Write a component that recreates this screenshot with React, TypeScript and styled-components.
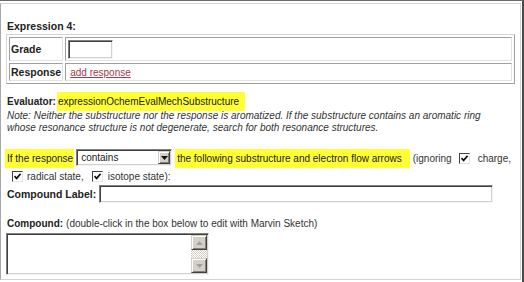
import React from "react"
import styled, { createGlobalStyle } from "styled-components"

const GlobalStyle = createGlobalStyle`
	html, body {
		margin: 0;
		padding: 0;
		background: #fff;
	}
	body {
		font-family: "Liberation Sans", Arial, sans-serif;
		color: #333;
	}
`

const Frame = styled.div`
	box-sizing: border-box;
	width: 524px;
	height: 282px;
	border-top: 1px solid #6a6a6a;
	border-right: 2px solid #4a4a4a;
	padding: 2px 1px 2px 0;
	background: #fff;
`

const Panel = styled.div`
	box-sizing: border-box;
	height: 100%;
	border: 1px solid #d4d4d4;
	border-left-color: #a8a8a8;
	padding: 16px 6px 0 6px;
	display: flex;
	flex-direction: column;
	align-items: flex-start;
`

const Title = styled.div`
	font-size: 10.5px;
	font-weight: bold;
	line-height: 13px;
	color: #222;
`

const Table = styled.table`
	margin: 1px 0 0 -1px;
	width: 509px;
	border-collapse: separate;
	border-spacing: 2px;
	border: 1px solid;
	border-color: #d4d4d4 #a0a0a0 #a0a0a0 #d4d4d4;
`

const Row = styled.tr<{ $h: number }>`
	height: ${(p) => p.$h}px;
`

const Cell = styled.td<{ $label?: boolean }>`
	border: 1px solid;
	border-color: #a0a0a0 #e2e2e2 #e2e2e2 #a0a0a0;
	padding: ${(p) => (p.$label ? "0 1px" : "0 2px")};
	width: ${(p) => (p.$label ? "1px" : "auto")};
	white-space: nowrap;
	vertical-align: middle;
	font-size: 10.5px;
	font-weight: bold;
	color: #222;
`

const SunkenInput = styled.div<{ $w: number; $h: number }>`
	box-sizing: border-box;
	width: ${(p) => p.$w}px;
	height: ${(p) => p.$h}px;
	border: 1px solid;
	border-color: #808080 #f4f4f4 #f4f4f4 #808080;
	box-shadow: inset 1px 1px #404040, inset -1px -1px #d4d0c8;
	background: #fff;
`

const Link = styled.a`
	margin-left: 2px;
	font-size: 10px;
	font-weight: normal;
	color: #a33a4a;
	text-decoration: underline;
`

const Line = styled.div<{ $h: number; $top?: number }>`
	display: flex;
	align-items: center;
	height: ${(p) => p.$h}px;
	margin-top: ${(p) => p.$top ?? 0}px;
	font-size: 10px;
	white-space: nowrap;
`

const Bold = styled.span<{ $size?: number }>`
	font-weight: bold;
	font-size: ${(p) => p.$size ?? 10}px;
	color: #222;
`

const Mark = styled.span<{ $l?: number; $r?: number; $ml?: number }>`
	display: inline-block;
	height: 19px;
	line-height: 19px;
	background: #ffff33;
	color: #222;
	padding: 0 ${(p) => p.$r ?? 1}px 0 ${(p) => p.$l ?? 2}px;
	margin-left: ${(p) => p.$ml ?? 0}px;
`

const Note = styled.div`
	font-size: 10px;
	font-style: italic;
	line-height: 12px;
	color: #333;
`

const Plain = styled.span<{ $ml?: number }>`
	margin-left: ${(p) => p.$ml ?? 0}px;
	color: #333;
`

const Select = styled.div`
	box-sizing: border-box;
	display: flex;
	width: 96px;
	height: 17px;
	margin-left: 2px;
	border: 1px solid;
	border-color: #808080 #f4f4f4 #f4f4f4 #808080;
	box-shadow: inset 1px 1px #404040, inset -1px -1px #d4d0c8;
	padding: 1px;
	background: #fff;
`

const SelectText = styled.span`
	flex: 1;
	padding-left: 3px;
	line-height: 13px;
	font-size: 10px;
	color: #222;
`

const ArrowButton = styled.div<{ $h: number }>`
	box-sizing: border-box;
	display: flex;
	align-items: center;
	justify-content: center;
	width: ${(p) => (p.$h > 14 ? 16 : 12)}px;
	height: ${(p) => p.$h}px;
	background: #d4d0c8;
	border: 1px solid;
	border-color: #d4d0c8 #404040 #404040 #d4d0c8;
	box-shadow: inset 1px 1px #fff, inset -1px -1px #808080;
`

const Check = styled.span<{ $ml?: number; $mt?: number }>`
	box-sizing: border-box;
	display: inline-flex;
	align-items: center;
	justify-content: center;
	width: 11px;
	height: 11px;
	margin-left: ${(p) => p.$ml ?? 0}px;
	margin-top: ${(p) => p.$mt ?? 0}px;
	border: 1px solid;
	border-color: #404040 #e4e4e4 #e4e4e4 #404040;
	background: #fff;
`

const CondRow = styled.div`
	display: flex;
	align-items: flex-start;
	height: 20px;
	margin-top: 15px;
	line-height: 19px;
	font-size: 10px;
	white-space: nowrap;
`

const TextArea = styled.div`
	box-sizing: border-box;
	display: flex;
	justify-content: flex-end;
	width: 203px;
	height: 42px;
	margin: 3px 0 0 -1px;
	border: 1px solid;
	border-color: #808080 #f4f4f4 #f4f4f4 #808080;
	box-shadow: inset 1px 1px #404040, inset -1px -1px #d4d0c8;
	padding: 1px;
	background: #fff;
`

const ScrollBar = styled.div`
	display: flex;
	flex-direction: column;
	width: 16px;
`

const Track = styled.div`
	flex: 1;
	background-color: #fff;
	background-image: repeating-conic-gradient(#d4d0c8 0 25%, #fff 0 50%);
	background-size: 2px 2px;
`

const Tick = () => (
	<svg width="9" height="9" viewBox="0 0 9 9">
		<path d="M1.5 4.2 L3.6 6.4 L7.6 1.8" fill="none" stroke="#111" strokeWidth="1.7" />
	</svg>
)

const Arrow = ({ up, color }: { up?: boolean; color: string }) => (
	<svg width="7" height="4" viewBox="0 0 7 4">
		<path d={up ? "M0 4 L3.5 0 L7 4 Z" : "M0 0 L7 0 L3.5 4 Z"} fill={color} />
	</svg>
)

export default function App() {
	return (
		<>
			<GlobalStyle />
			<Frame>
				<Panel>
					<Title>Expression 4:</Title>
					<Table>
						<tbody>
							<Row $h={24}>
								<Cell $label>Grade</Cell>
								<Cell>
									<SunkenInput $w={45} $h={19} />
								</Cell>
							</Row>
							<Row $h={18}>
								<Cell $label>Response</Cell>
								<Cell>
									<Link href="#">add response</Link>
								</Cell>
							</Row>
						</tbody>
					</Table>

					<Line $h={18} $top={8}>
						<Bold>Evaluator:</Bold>
						<Mark $ml={1} $l={1} $r={6}>expressionOchemEvalMechSubstructure</Mark>
					</Line>
					<Note>
						Note: Neither the substructure nor the response is aromatized. If the substructure contains an aromatic ring
						<br />
						whose resonance structure is not degenerate, search for both resonance structures.
					</Note>

					<CondRow>
						<Mark $ml={-2}>If the response</Mark>
						<Select>
							<SelectText>contains</SelectText>
							<ArrowButton $h={13}>
								<Arrow color="#111" />
							</ArrowButton>
						</Select>
						<Mark $ml={3} $r={8}>the following substructure and electron flow arrows</Mark>
						<Plain $ml={3}>(ignoring</Plain>
						<Check $ml={7} $mt={4}>
							<Tick />
						</Check>
						<Plain $ml={8}>charge,</Plain>
					</CondRow>
					<Line $h={14}>
						<Check $ml={5}>
							<Tick />
						</Check>
						<Plain $ml={4}>radical state,</Plain>
						<Check $ml={8}>
							<Tick />
						</Check>
						<Plain $ml={5}>isotope state):</Plain>
					</Line>

					<Line $h={18} $top={2}>
						<Bold $size={10.5}>Compound Label:</Bold>
						<SunkenInput $w={394} $h={18} style={{ marginLeft: 3 }} />
					</Line>

					<Line $h={13} $top={14}>
						<Bold>Compound:</Bold>
						<Plain $ml={3}>(double-click in the box below to edit with Marvin Sketch)</Plain>
					</Line>
					<TextArea>
						<ScrollBar>
							<ArrowButton $h={15}>
								<Arrow up color="#a0a0a0" />
							</ArrowButton>
							<Track />
							<ArrowButton $h={15}>
								<Arrow color="#a0a0a0" />
							</ArrowButton>
						</ScrollBar>
					</TextArea>
				</Panel>
			</Frame>
		</>
	)
}
